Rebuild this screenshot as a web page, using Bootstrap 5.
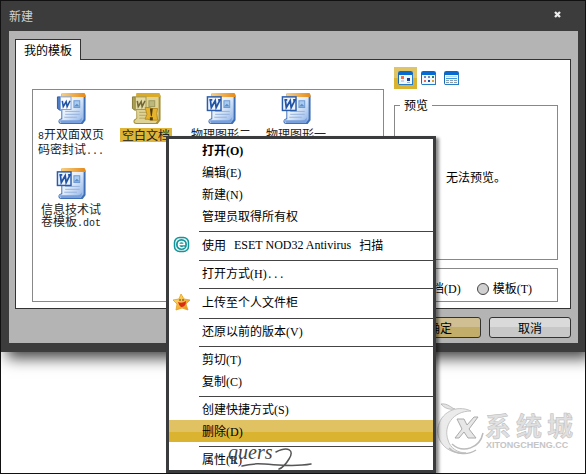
<!DOCTYPE html>
<html lang="zh-CN">
<head>
<meta charset="utf-8">
<meta name="viewport" content="width=device-width, initial-scale=1">
<title>新建</title>
<link href="https://cdn.jsdelivr.net/npm/bootstrap@5.3.0/dist/css/bootstrap.min.css" rel="stylesheet">
<style>
body{font:12px/16px "Noto Sans CJK SC",sans-serif;color:#000;background:#fff}
.desk{min-height:100vh;border:1px solid #111;overflow:hidden}
.latin{font-family:"Liberation Mono",monospace;font-size:10px}
.roman{font-family:"Liberation Serif",serif;font-size:12px}
.dialog-box{background:#3c3c3c;padding:0 7px 9px 8px;box-shadow:6px 6px 14px rgba(0,0,0,.75)}
.title-bar{height:30px;color:#d2d2d2}
.close-btn{width:16px;height:16px;margin:0 13px 4px 0;color:#eee}
.work{background:#b4b4b4;padding:8px 7px 5px 6px}
.nav-tabs{--bs-nav-tabs-border-width:0}
.nav-tabs .nav-link,.nav-tabs .nav-link.active{border:1px solid #333;border-bottom:0;border-radius:0;background:#fff;color:#000;padding:1px 8px;height:21px;line-height:16px;margin-bottom:-1px;z-index:1}
.panel{background:#fff;border:1px solid #333;padding:7px 12px 6px 16px;gap:10px}
.files{border:1px solid #888;margin-top:22px;min-height:213px;display:grid;grid-template-columns:repeat(auto-fill,75px);grid-auto-rows:75px;align-content:start}
.file{display:flex;flex-direction:column;align-items:center;border:0;background:none;padding:3px 0 0 1px;font-size:12px;line-height:12px;color:#222}
.file svg{flex-shrink:0;margin:0 0 3px}
.file-name{display:block;padding:0 2px}
.file.chosen .file-name{background:#deb536;line-height:14px}
.side{width:164px}
.view-btn{width:23px;height:22px}
.view-btn.on{background:linear-gradient(#dfc468 50%,#dab431 50%)}
.group{border:1px solid #888;padding:0 5px;min-width:0}
.group legend{float:none;width:auto;margin:0;padding:0 4px;font-size:12px;line-height:16px}
.group .form-check-input{width:12px;height:12px;margin:0;background:#d0d0d0;border:1px solid #444}
.group .form-check-input:checked{background:radial-gradient(#333 35%,#d0d0d0 40%)}
.act{width:82px;height:21px;padding:0;font-size:12px;line-height:18px;border:1px solid #333;border-radius:3px;color:#000;background:linear-gradient(#dadada 50%,#c8c8c8 50%)}
.act.main{background:linear-gradient(#cfbf92 50%,#c3ad6b 50%)}
.ctx{position:absolute;left:165px;top:135px;width:270px;border:3px solid #3a3b3c;border-radius:0;padding:0;background:#fff;color:#000;font-size:12px;box-shadow:3px 2px 3px rgba(0,0,0,.45);z-index:10}
.ctx .dropdown-item{height:22px;padding:0 0 0 33px;line-height:22px;color:#000}
.ctx .dropdown-item.chosen{background:linear-gradient(#e0c262 54%,#dab431 54%)}
.ctx .with-icon{padding-left:4px;height:23px}
.ctx .with-icon svg{width:18px;height:18px;margin-right:11px}
.ctx .tall{height:24px}
.ctx .dropdown-divider{margin:4px 0 1px 30px;border-top:1px solid #444;opacity:1}
.scribble{position:absolute;left:222px;top:444px;z-index:11;pointer-events:none}
.stamp{position:absolute;right:11px;top:400px}
</style>
<script src="https://cdn.jsdelivr.net/npm/bootstrap@5.3.0/dist/js/bootstrap.bundle.min.js"></script>
</head>
<body>
<svg width="0" height="0" class="position-absolute" aria-hidden="true">
<defs>
<linearGradient id="paper" x1="0" y1="0" x2="1" y2="1"><stop offset="0" stop-color="#fff"/><stop offset=".5" stop-color="#e2edfb"/><stop offset="1" stop-color="#8ab0e6"/></linearGradient>
<linearGradient id="orange"><stop offset="0" stop-color="#f6cf86"/><stop offset="1" stop-color="#e58a18"/></linearGradient>
<linearGradient id="gold" x1="0" y1="0" x2="1" y2="1"><stop offset="0" stop-color="#ffef80"/><stop offset="1" stop-color="#e98a0c"/></linearGradient>
<g id="sheet">
<path d="M5 1H28Q30 1 30 3V28L27 32H5Q2 32 2 29Q2 27 5 26Z" fill="#3f6fb5"/>
<path d="M5 1H28V27L25 31H5Q3 31 3 29Q3 27 6 27V1Z" fill="url(#paper)"/>
<path d="M5 0H29Q30 1 30 4H5Z" fill="url(#orange)"/>
<path d="M3 28H22Q25 28 26 25V30L24 31H5Z" fill="#78a0dc"/>
<rect x="18" y="8" width="6" height="7" fill="#a9cbf0" stroke="#6c98d2"/><path d="M18 14l3-3 3 3" fill="#5c8fca"/>
<path d="M9 19H24M9 22H24M8 25H21" stroke="#96b3dc"/>
</g>
<symbol id="dot" viewBox="0 0 31 33"><use href="#sheet"/><rect x="1" y="4" width="14" height="14" fill="#eef4ff" stroke="#2a5caa" stroke-width="1.5"/><path d="M4 7L5 15L9 8L10 15L14 7M3 7H6M12 7H15" fill="none" stroke="#2353a3" stroke-width="1.8"/></symbol>
<symbol id="doc" viewBox="0 0 31 33"><use href="#sheet"/><path d="M4 4H1V16L4 18Z" fill="#4d7bc4" stroke="#2a5caa"/><rect x="4" y="4" width="11" height="13" fill="#fafcff" stroke="#7fa3d8"/><path d="M6 8L7 14L10 9L11 14L14 8" fill="none" stroke="#2353a3" stroke-width="1.6"/></symbol>
<symbol id="warn" viewBox="0 0 31 33">
<path d="M5 1H28Q30 1 30 3V28L27 32H5Q2 32 2 29Q2 27 5 26Z" fill="#a58f3b"/><path d="M5 1H28V27L25 31H5Q3 31 3 29L6 26Z" fill="#ded294"/><path d="M5 0H29L30 4H5Z" fill="#d9ab28"/>
<rect x="18" y="8" width="6" height="6" fill="#bcb77c" stroke="#9c985e"/><path d="M8 20H17M8 23H16M8 26H16" stroke="#b3a665"/>
<path d="M4 4H1V16L4 18Z" fill="#aca150" stroke="#857a3a"/><rect x="4" y="4" width="11" height="13" fill="#e4daa3" stroke="#a39750"/><path d="M6 8L7 14L10 9L11 14L14 8" fill="none" stroke="#71683a" stroke-width="1.6"/>
<path d="M14 15H19L21 16H27L26 21L27 28H20L17 27H14L16 22Z" fill="#e5b32c" stroke="#b98b20"/><path d="M19 16H22L21 24H20ZM19 25H22V28H19Z" fill="#4c3a10"/></symbol>
<g id="pane"><rect x=".5" y=".5" width="14" height="13" rx="1" fill="#f0f7ff" stroke="#1767b5"/><path d="M1 1H14V4H1Z" fill="#0869d0"/><path d="M1 13.5H15M14.500 3V13" stroke="#287bc5"/></g>
</defs></svg>

<div class="desk position-relative">
<main class="dialog-box" role="dialog" aria-label="新建">
<header class="title-bar d-flex align-items-center justify-content-between">
<span>新建</span>
<button class="close-btn btn p-0 border-0 d-flex align-items-center justify-content-center" aria-label="关闭"><svg width="7" height="7" viewBox="0 0 7 7"><path d="M1 1L6 6M6 1L1 6" stroke="currentColor" stroke-width="2.300"/></svg></button>
</header>
<div class="work">
<ul class="nav nav-tabs"><li class="nav-item"><button class="nav-link active position-relative">我的模板</button></li></ul>
<div class="panel d-flex">
<div class="files flex-grow-1">
<button class="file"><svg width="31" height="32"><use href="#doc"/></svg><span class="file-name"><span class="latin">8</span>开双面双页<br>码密封试<span class="latin">...</span></span></button>
<button class="file chosen"><svg width="31" height="32"><use href="#warn"/></svg><span class="file-name">空白文档</span></button>
<button class="file"><svg width="31" height="32"><use href="#dot"/></svg><span class="file-name">物理图形二</span></button>
<button class="file"><svg width="31" height="32"><use href="#dot"/></svg><span class="file-name">物理图形一</span></button>
<button class="file"><svg width="31" height="32"><use href="#dot"/></svg><span class="file-name">信息技术试<br>卷模板<span class="latin">.dot</span></span></button>
</div>
<div class="side d-flex flex-column flex-shrink-0">
<div class="d-flex mb-2">
<button class="view-btn on btn p-0 border-0 rounded-0 d-flex align-items-center justify-content-center" aria-label="大图标"><svg width="15" height="14"><use href="#pane"/><path d="M3 5H6V8H3Z" fill="#ef7147"/><path d="M9 7H12V10H9Z" fill="#1b3e9c"/><path d="M3 10H6M9 11.500H12" stroke="#9ab4cf"/></svg></button>
<button class="view-btn btn p-0 border-0 d-flex align-items-center justify-content-center" aria-label="列表"><svg width="15" height="14"><use href="#pane"/><path d="M3 5H5V7H3ZM7 5H9V7H7Z" fill="#7a83ad"/><path d="M11 5H13V7H11Z" fill="#287d62"/><path d="M3 9H5V11H3Z" fill="#e46c50"/><path d="M7 9H9V11H7Z" fill="#26479b"/><path d="M11 9H13V11H11Z" fill="#dda42d"/></svg></button>
<button class="view-btn btn p-0 border-0 d-flex align-items-center justify-content-center" aria-label="详细资料"><svg width="15" height="14"><use href="#pane"/><path d="M2 7.500H13" stroke="#3c9be4"/><path d="M2 5.500H13" stroke="#b9d9f5"/><path d="M2 9.500H13M2 11.500H13" stroke="#8c9cab" stroke-dasharray="3 1"/></svg></button>
</div>
<fieldset class="group flex-grow-1"><legend>预览</legend><p class="text-center mb-0 pt-5 mt-2">无法预览。</p></fieldset>
<fieldset class="group"><legend>新建</legend>
<div class="d-flex align-items-center justify-content-between pe-3 ps-1 pt-1 pb-1">
<span class="d-flex align-items-center gap-1"><input class="form-check-input" type="radio" name="kind" id="kd" checked><label for="kd">文档<span class="roman">(D)</span></label></span>
<span class="d-flex align-items-center gap-1 me-1"><input class="form-check-input" type="radio" name="kind" id="kt"><label for="kt">模板<span class="roman">(T)</span></label></span>
</div></fieldset>
</div>
</div>
<div class="d-flex justify-content-end pt-2"><button class="act main me-2">确定</button><button class="act">取消</button></div>
</div>
</main>

<div class="stamp" aria-hidden="true"><svg width="138" height="56" viewBox="0 0 138 56">
<path d="M5 3C12 2 15 7 19 8C13 9 8 7 5 3Z" fill="#e4e4e4" stroke="#aaa" stroke-width=".7"/>
<path d="M35 10C20 3 4 12 2 27C0 42 13 54 30 52C22 52 14 47 12 39C7 25 17 10 35 10Z" fill="#ebebeb" stroke="#c4c4c4"/>
<path d="M16 43C27 53 44 47 47 32M13 47C20 54 33 54 40 49" fill="none" stroke="#bbb" stroke-width="1.500"/>
<path d="M21 18H28L31 24L38 16H42L33 28L40 37H32L28 31L23 37H19L26 28Z" fill="#e7e7e7" stroke="#aaa"/>
<g fill="#e0e0e0" stroke="#bbb" stroke-width=".5" font-family="Noto Sans CJK SC,sans-serif" font-weight="700" font-size="26"><text x="49" y="35">系</text><text x="80" y="35">统</text><text x="111" y="35">城</text></g>
<text x="50" y="47" font-family="Liberation Sans,sans-serif" font-size="9" font-weight="700" fill="#c5c5c5">XITONGCHENG.CC</text></svg></div>

<div class="ctx dropdown-menu show m-0" role="menu">
<button class="dropdown-item fw-bold">打开<span class="roman">(O)</span></button>
<button class="dropdown-item">编辑<span class="roman">(E)</span></button>
<button class="dropdown-item">新建<span class="roman">(N)</span></button>
<button class="dropdown-item">管理员取得所有权</button>
<hr class="dropdown-divider">
<button class="dropdown-item with-icon d-flex align-items-center"><svg viewBox="0 0 18 18"><rect x="1.500" y="1.500" width="14" height="14" rx="5" fill="#e8f8f8" stroke="#16949a" stroke-width="1.500"/><circle cx="8.500" cy="8.500" r="5.500" fill="#16949a"/><path d="M5.500 8.500H11.500C11.500 4.500 5.500 4.500 5.500 8.500C5.500 12 9.500 12.500 11.500 10.800" fill="none" stroke="#fff" stroke-width="1.500"/></svg><span class="d-flex gap-2"><span>使用</span><span class="roman">ESET NOD32 Antivirus</span><span>扫描</span></span></button>
<hr class="dropdown-divider">
<button class="dropdown-item">打开方式<span class="roman">(H)</span><span class="latin">...</span></button>
<hr class="dropdown-divider">
<button class="dropdown-item with-icon tall d-flex align-items-center"><svg viewBox="0 0 18 18"><path d="M8 1L11 6L17 7L13 11L15 17L9 15L3 17L4 11L0 7L6 6Z" fill="url(#gold)" stroke="#e4a01c" stroke-width=".8"/><path d="M5 9Q9 11 13 8Q13 14 8 14Q6 13 5 9Z" fill="#d92c16"/><path d="M7 6V8M10 6V8" stroke="#63430a"/></svg><span>上传至个人文件柜</span></button>
<hr class="dropdown-divider">
<button class="dropdown-item">还原以前的版本<span class="roman">(V)</span></button>
<hr class="dropdown-divider">
<button class="dropdown-item">剪切<span class="roman">(T)</span></button>
<button class="dropdown-item">复制<span class="roman">(C)</span></button>
<hr class="dropdown-divider">
<button class="dropdown-item">创建快捷方式<span class="roman">(S)</span></button>
<button class="dropdown-item chosen">删除<span class="roman">(D)</span></button>
<hr class="dropdown-divider">
<button class="dropdown-item">属性<span class="roman">(R)</span></button>
</div>
<svg class="scribble" width="94" height="28" viewBox="0 0 94 28"><text x="5" y="14" font-family="Liberation Serif,serif" font-style="italic" font-size="20" fill="#444">quers</text><path d="M53 7C65 1 72 5 66 14C63 19 59 23 56 24M19 21C38 15 60 24 88 19" fill="none" stroke="#555" stroke-width="1.500" stroke-linecap="round"/></svg>
</div>
</body>
</html>
